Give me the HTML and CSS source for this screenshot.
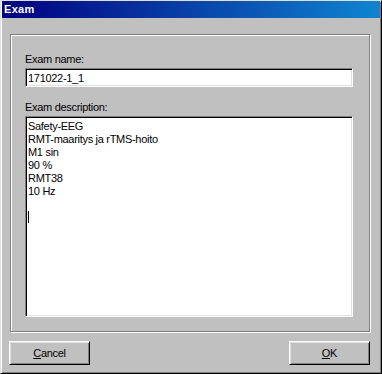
FILE: index.html
```html
<!DOCTYPE html>
<html lang="en">
<head>
    <meta charset="UTF-8">
    <meta name="viewport" content="width=device-width, initial-scale=1.0">
    <title>Exam</title>
    <link rel="stylesheet" href="styles.css">
</head>
<body>

<div class="window">
    <div class="title-bar">Exam</div>
    <div class="content">
        <div class="group">
            <div class="label">Exam name:</div>
            <div class="field">171022-1_1</div>
            <div class="label label-gap">Exam description:</div>
            <div class="memo">
                <div class="line">Safety-EEG</div>
                <div class="line">RMT-maaritys ja rTMS-hoito</div>
                <div class="line">M1 sin</div>
                <div class="line">90 %</div>
                <div class="line">RMT38</div>
                <div class="line">10 Hz</div>
                <div class="line"></div>
                <div class="line"><span class="caret"></span></div>
            </div>
        </div>
        <div class="buttons">
            <button type="button"><u>C</u>ancel</button>
            <button type="button"><u>O</u>K</button>
        </div>
    </div>
</div>

</body>
</html>
```

FILE: styles.css
```css
body {
    margin: 0;
    background-color: #c0c0c0;
    font-family: "Liberation Sans", Arial, sans-serif;
    font-size: 11px;
    letter-spacing: -0.3px;
    color: #000;
}
.window {
    box-sizing: border-box;
    width: 382px;
    height: 374px;
    border-top: 1px solid #dfdfdf;
    border-left: 1px solid #dfdfdf;
    border-right: 1px solid #000;
    border-bottom: 1px solid #000;
    box-shadow: inset 1px 1px #fff, inset -1px -1px #808080;
    background-color: #c0c0c0;
    padding: 0 1px 0 1px;
}
.title-bar {
    height: 17px;
    line-height: 17px;
    padding-left: 2px;
    background: linear-gradient(to right, #000080, #1084d0);
    color: #fff;
    font-weight: bold;
    font-size: 11px;
    letter-spacing: 0.3px;
}
.content {
    padding: 16px 10px 0 8px;
}
.group {
    border: 1px solid #808080;
    box-shadow: inset 1px 1px #fff, 1px 1px #fff;
    padding: 18px 16px 14px 14px;
}
.label {
    line-height: 13px;
    height: 13px;
    margin-bottom: 2px;
}
.label-gap {
    margin-top: 14px;
}
.field,
.memo {
    box-sizing: border-box;
    background-color: #fff;
    border-top: 1px solid #808080;
    border-left: 1px solid #808080;
    border-right: 1px solid #fff;
    border-bottom: 1px solid #fff;
    box-shadow: inset 1px 1px #000, inset -1px -1px #dfdfdf;
}
.field {
    height: 19px;
    line-height: 13px;
    padding: 3px 3px 0 2px;
}
.memo {
    height: 201px;
    padding: 3px 3px 0 2px;
}
.line {
    height: 13px;
    line-height: 13px;
    white-space: pre;
}
.caret {
    display: inline-block;
    width: 1px;
    height: 12px;
    background-color: #000;
    vertical-align: top;
}
.buttons {
    display: flex;
    justify-content: space-between;
    margin: 9px 0 0 -1px;
}
button {
    width: 81px;
    height: 24px;
    padding: 0;
    background-color: #c0c0c0;
    font-family: "Liberation Sans", Arial, sans-serif;
    font-size: 11px;
    letter-spacing: -0.3px;
    color: #000;
    border-top: 1px solid #fff;
    border-left: 1px solid #fff;
    border-right: 1px solid #000;
    border-bottom: 1px solid #000;
    box-shadow: inset 1px 1px #dfdfdf, inset -1px -1px #808080;
}
```
